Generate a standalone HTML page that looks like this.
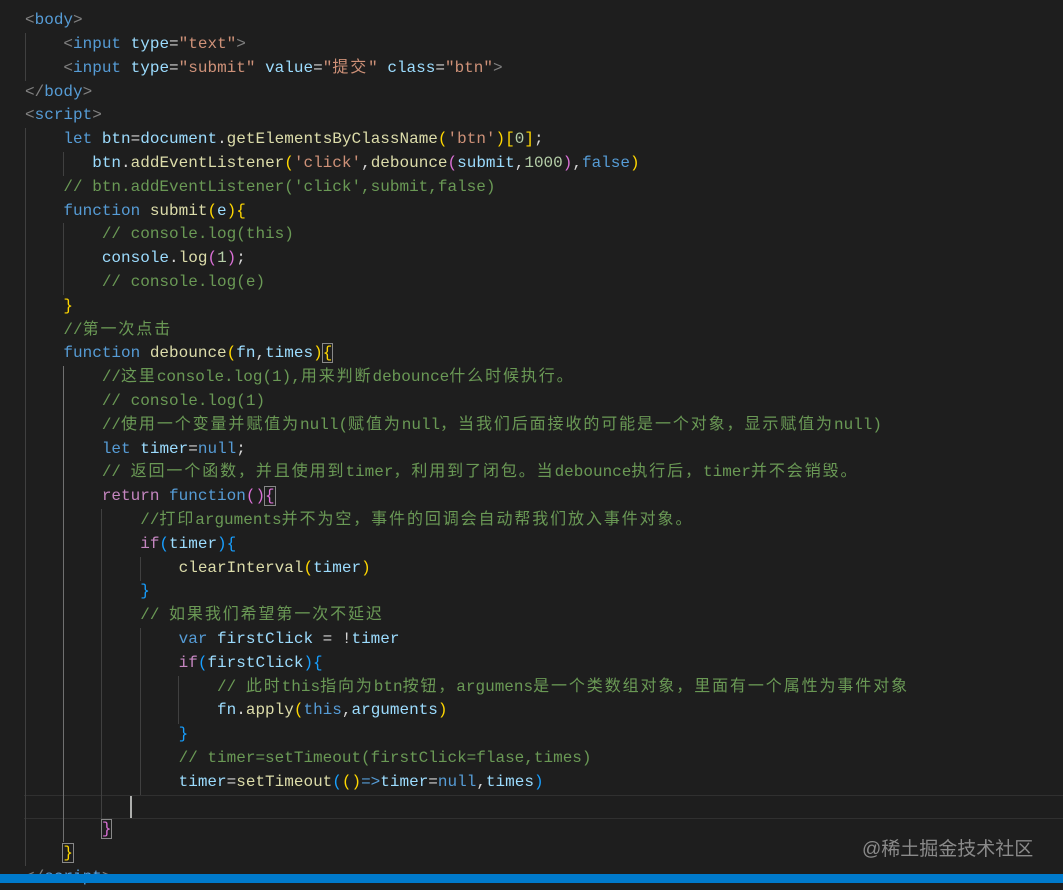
<!DOCTYPE html>
<html><head><meta charset="utf-8"><style>
body{margin:0;width:1063px;height:883px;background:#1e1e1e;overflow:hidden;position:relative;font-family:"Liberation Mono","Noto Sans CJK SC",monospace;font-size:16px;color:#d4d4d4}
.l{position:absolute;left:25px;height:23.8px;line-height:23.8px;white-space:pre}
.t{color:#808080}.n{color:#569cd6}.a{color:#9cdcfe}.s{color:#ce9178}.k{color:#569cd6}.c{color:#c586c0}.v{color:#9cdcfe}.f{color:#dcdcaa}.m{color:#6a9955}.num{color:#b5cea8}.y{color:#ffd700}.p{color:#da70d6}.b{color:#179fff}
.z{font-family:"Noto Sans CJK SC",sans-serif;letter-spacing:1.9px;line-height:10px}
.g{position:absolute;width:1px;background:#404040}
.bx{outline:1px solid #888}
</style></head><body>
<div style="position:absolute;left:24px;right:0;top:795px;height:22px;border-top:1px solid #303030;border-bottom:1px solid #303030"></div>
<div class="g" style="left:25px;top:33px;height:48px"></div>
<div class="g" style="left:25px;top:128px;height:738px"></div>
<div class="g" style="left:63px;top:152px;height:24px"></div>
<div class="g" style="left:63px;top:223px;height:72px"></div>
<div class="g" style="left:63px;top:366px;height:476px;background:#707070"></div>
<div class="g" style="left:101px;top:509px;height:310px"></div>
<div class="g" style="left:140px;top:557px;height:24px"></div>
<div class="g" style="left:140px;top:628px;height:167px"></div>
<div class="g" style="left:178px;top:676px;height:48px"></div>
<div style="position:absolute;left:130px;top:796px;width:2px;height:22px;background:#aeafad"></div>

<div class="l" style="top:-14.7px"><span class="t">&lt;/</span><span class="n">head</span><span class="t">&gt;</span></div>
<div class="l" style="top:9.1px"><span class="t">&lt;</span><span class="n">body</span><span class="t">&gt;</span></div>
<div class="l" style="top:32.9px">    <span class="t">&lt;</span><span class="n">input</span> <span class="a">type</span>=<span class="s">"text"</span><span class="t">&gt;</span></div>
<div class="l" style="top:56.7px">    <span class="t">&lt;</span><span class="n">input</span> <span class="a">type</span>=<span class="s">"submit"</span> <span class="a">value</span>=<span class="s">"<span class="z">提交</span>"</span> <span class="a">class</span>=<span class="s">"btn"</span><span class="t">&gt;</span></div>
<div class="l" style="top:80.5px"><span class="t">&lt;/</span><span class="n">body</span><span class="t">&gt;</span></div>
<div class="l" style="top:104.3px"><span class="t">&lt;</span><span class="n">script</span><span class="t">&gt;</span></div>
<div class="l" style="top:128.1px">    <span class="k">let</span> <span class="v">btn</span>=<span class="v">document</span>.<span class="f">getElementsByClassName</span><span class="y">(</span><span class="s">'btn'</span><span class="y">)[</span><span class="num">0</span><span class="y">]</span>;</div>
<div class="l" style="top:151.9px">       <span class="v">btn</span>.<span class="f">addEventListener</span><span class="y">(</span><span class="s">'click'</span>,<span class="f">debounce</span><span class="p">(</span><span class="v">submit</span>,<span class="num">1000</span><span class="p">)</span>,<span class="k">false</span><span class="y">)</span></div>
<div class="l m" style="top:175.7px">    // btn.addEventListener('click',submit,false)</div>
<div class="l" style="top:199.5px">    <span class="k">function</span> <span class="f">submit</span><span class="y">(</span><span class="v">e</span><span class="y">){</span></div>
<div class="l m" style="top:223.3px">        // console.log(this)</div>
<div class="l" style="top:247.1px">        <span class="v">console</span>.<span class="f">log</span><span class="p">(</span><span class="num">1</span><span class="p">)</span>;</div>
<div class="l m" style="top:270.9px">        // console.log(e)</div>
<div class="l" style="top:294.7px">    <span class="y">}</span></div>
<div class="l m" style="top:318.5px">    //<span class="z">第一次点击</span></div>
<div class="l" style="top:342.3px">    <span class="k">function</span> <span class="f">debounce</span><span class="y">(</span><span class="v">fn</span>,<span class="v">times</span><span class="y">)</span><span class="y bx">{</span></div>
<div class="l m" style="top:366.1px">        //<span class="z">这里</span>console.log(1),<span class="z">用来判断</span>debounce<span class="z">什么时候执行。</span></div>
<div class="l m" style="top:389.9px">        // console.log(1)</div>
<div class="l m" style="top:413.7px">        //<span class="z">使用一个变量并赋值为</span>null(<span class="z">赋值为</span>null<span class="z">，当我们后面接收的可能是一个对象，显示赋值为</span>null)</div>
<div class="l" style="top:437.5px">        <span class="k">let</span> <span class="v">timer</span>=<span class="k">null</span>;</div>
<div class="l m" style="top:461.3px">        // <span class="z">返回一个函数，并且使用到</span>timer<span class="z">，利用到了闭包。当</span>debounce<span class="z">执行后，</span>timer<span class="z">并不会销毁。</span></div>
<div class="l" style="top:485.1px">        <span class="c">return</span> <span class="k">function</span><span class="p">()</span><span class="p bx">{</span></div>
<div class="l m" style="top:508.9px">            //<span class="z">打印</span>arguments<span class="z">并不为空，事件的回调会自动帮我们放入事件对象。</span></div>
<div class="l" style="top:532.7px">            <span class="c">if</span><span class="b">(</span><span class="v">timer</span><span class="b">){</span></div>
<div class="l" style="top:556.5px">                <span class="f">clearInterval</span><span class="y">(</span><span class="v">timer</span><span class="y">)</span></div>
<div class="l" style="top:580.3px">            <span class="b">}</span></div>
<div class="l m" style="top:604.1px">            // <span class="z">如果我们希望第一次不延迟</span></div>
<div class="l" style="top:627.9px">                <span class="k">var</span> <span class="v">firstClick</span> = !<span class="v">timer</span></div>
<div class="l" style="top:651.7px">                <span class="c">if</span><span class="b">(</span><span class="v">firstClick</span><span class="b">){</span></div>
<div class="l m" style="top:675.5px">                    // <span class="z">此时</span>this<span class="z">指向为</span>btn<span class="z">按钮，</span>argumens<span class="z">是一个类数组对象，里面有一个属性为事件对象</span></div>
<div class="l" style="top:699.3px">                    <span class="v">fn</span>.<span class="f">apply</span><span class="y">(</span><span class="k">this</span>,<span class="v">arguments</span><span class="y">)</span></div>
<div class="l" style="top:723.1px">                <span class="b">}</span></div>
<div class="l m" style="top:746.9px">                // timer=setTimeout(firstClick=flase,times)</div>
<div class="l" style="top:770.7px">                <span class="v">timer</span>=<span class="f">setTimeout</span><span class="b">(</span><span class="y">()</span><span class="k">=&gt;</span><span class="v">timer</span>=<span class="k">null</span>,<span class="v">times</span><span class="b">)</span></div>
<div class="l" style="top:818.3px">        <span class="p bx">}</span></div>
<div class="l" style="top:842.1px">    <span class="y bx">}</span></div>
<div class="l" style="top:865.9px"><span class="t">&lt;/</span><span class="n">script</span><span class="t">&gt;</span></div>
<div style="position:absolute;left:862px;top:834px;font-family:'Liberation Sans','Noto Sans CJK SC',sans-serif;font-size:19px;color:#8a8a8a;white-space:nowrap">@稀土掘金技术社区</div>
<div style="position:absolute;left:0;right:0;top:874px;height:9px;background:#007acc"></div>
</body></html>
